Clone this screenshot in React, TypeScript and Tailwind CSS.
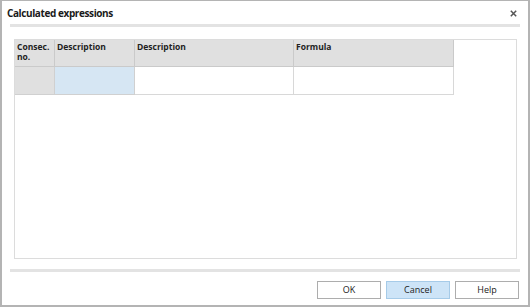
export default function App() {
    const font = { fontFamily: "'Open Sans', 'Noto Sans', sans-serif" };
    return (
        <div className="w-[531px] h-[308px] bg-white overflow-hidden" style={font}>
            <div className="w-[530px] h-[307px] border-l-2 border-t border-r-2 border-b-2 border-[#b4b4b4] flex flex-col">
                <div className="flex items-center justify-between h-[23px] pl-[5px] pr-[11px] pt-[2px]">
                    <span className="text-[10px] font-bold text-[#1a1a1a] tracking-[-0.4px]">Calculated expressions</span>
                    <svg width="7" height="7" viewBox="0 0 7 7">
                        <path d="M0.8 0.8L6.2 6.2M6.2 0.8L0.8 6.2" stroke="#555" strokeWidth="1.5" />
                    </svg>
                </div>
                <div className="mx-[8px] h-[3px] bg-[#e3e3e3]" />
                <div className="ml-[12px] mr-[11px] mt-[12px] h-[220px] border border-[#dcdcdc] bg-white">
                    <div className="flex">
                        <div className="w-[40px] h-[27px] bg-[#e0e0e0] border-r border-b border-[#cacaca] px-[2px] pt-[2px] text-[8.5px] font-bold leading-[10px] text-[#222]">
                            Consec.<br />no.
                        </div>
                        <div className="w-[80px] h-[27px] bg-[#e0e0e0] border-r border-b border-[#cacaca] px-[2px] pt-[2px] text-[8.5px] font-bold leading-[10px] text-[#222]">
                            Description
                        </div>
                        <div className="w-[159px] h-[27px] bg-[#e0e0e0] border-r border-b border-[#cacaca] px-[2px] pt-[2px] text-[8.5px] font-bold leading-[10px] text-[#222]">
                            Description
                        </div>
                        <div className="w-[160px] h-[27px] bg-[#e0e0e0] border-r border-b border-[#cacaca] px-[2px] pt-[2px] text-[8.5px] font-bold leading-[10px] text-[#222]">
                            Formula
                        </div>
                    </div>
                    <div className="flex">
                        <div className="w-[40px] h-[28px] bg-[#e0e0e0] border-r border-b border-[#d0d0d0]" />
                        <div className="w-[80px] h-[28px] bg-[#d6e6f3] border-r border-b border-[#d0d0d0]" />
                        <div className="w-[159px] h-[28px] bg-white border-r border-b border-[#d8d8d8]" />
                        <div className="w-[160px] h-[28px] bg-white border-r border-b border-[#d8d8d8]" />
                    </div>
                </div>
                <div className="mx-[8px] mt-[10px] h-[3px] bg-[#e3e3e3]" />
                <div className="flex justify-end gap-[5px] mt-[9px] mr-[9px]">
                    <button className="w-[64px] h-[18px] border border-[#adadad] bg-white text-[9px] text-[#222]">OK</button>
                    <button className="w-[64px] h-[18px] border border-[#a6cbe8] bg-[#cde4f7] text-[9px] text-[#222]">Cancel</button>
                    <button className="w-[64px] h-[18px] border border-[#adadad] bg-white text-[9px] text-[#222]">Help</button>
                </div>
            </div>
        </div>
    );
}
